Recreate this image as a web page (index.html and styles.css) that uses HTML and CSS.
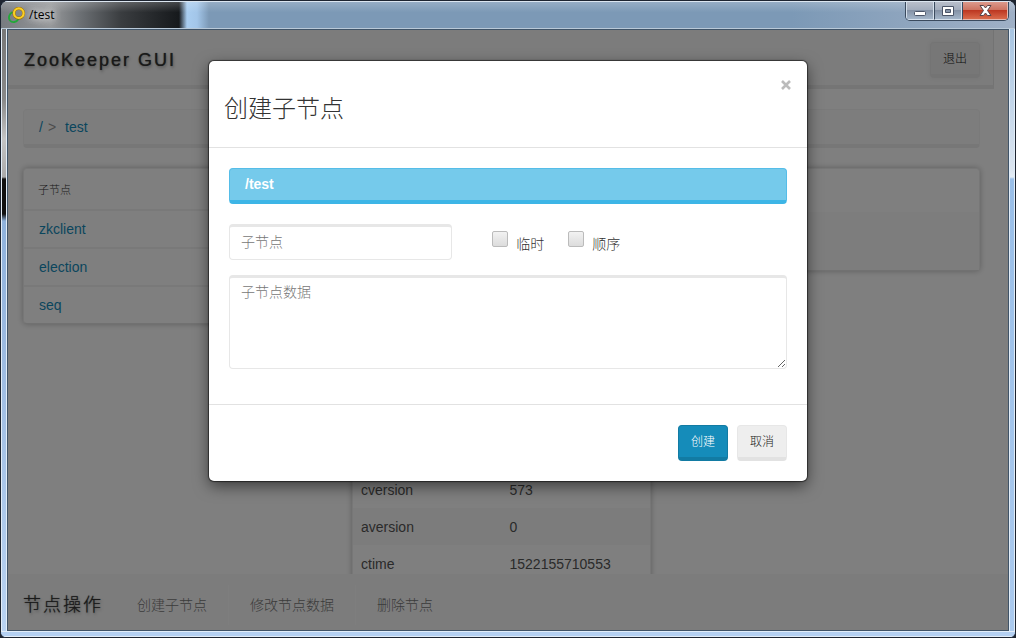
FILE: index.html
```html
<!DOCTYPE html>
<html lang="zh-CN">
<head>
<meta charset="utf-8">
<title>/test</title>
<link rel="stylesheet" href="styles.css">
</head>
<body>
<div class="window">
  <header class="titlebar">
    <svg class="app-icon" width="17" height="17" viewBox="0 0 17 17" aria-hidden="true">
      <path d="M4.500 5C1 7 0 11 2 13.500c2.200 2.500 6.500 2 8.500-1.500" fill="none" stroke="#22a838" stroke-width="1.800"/>
      <circle cx="10.800" cy="6.200" r="4.800" fill="none" stroke="#9a6a00" stroke-width="3"/>
      <circle cx="10.800" cy="6.200" r="4.800" fill="none" stroke="#f9cf25" stroke-width="2.200"/>
    </svg>
    <span class="title">/test</span>
    <div class="controls">
      <button class="control" type="button" aria-label="最小化"><svg width="14" height="10" viewBox="0 0 14 10"><rect x="1.500" y="5.500" width="11" height="4" rx="1" fill="#fff" stroke="#4b5568"/></svg></button>
      <button class="control" type="button" aria-label="最大化"><svg width="12" height="10" viewBox="0 0 12 10"><path fill-rule="evenodd" d="M.5.5h11v9H.5zM3.500 3.500v3h5v-3z" fill="#fff" stroke="#4b5568"/></svg></button>
      <button class="control control-close" type="button" aria-label="关闭窗口"><svg width="13" height="11" viewBox="0 0 13 11"><path d="M1 .5h3.500l2 2.500 2-2.500H12L8.500 5.500l3.500 5H8.500l-2-2.500-2 2.500H1l3.500-5z" fill="#fff" stroke="#54434a"/></svg></button>
    </div>
  </header>
  <div class="frame">
    <div class="edge edge-left"></div>
    <div class="client">
      <div class="page">
        <nav class="navbar">
          <a class="brand" href="#">ZooKeeper GUI</a>
          <button class="btn" type="button">退出</button>
        </nav>
        <div class="content">
          <ol class="breadcrumb">
            <li><a href="#">/</a></li>
            <li><a href="#">test</a></li>
          </ol>
          <div class="columns">
            <section class="card">
              <h2 class="card-heading">子节点</h2>
              <ul class="list">
                <li><a href="#">zkclient</a></li>
                <li><a href="#">election</a></li>
                <li><a href="#">seq</a></li>
              </ul>
            </section>
            <section class="card stat">
              <table class="stat-table">
                <tr><td>cversion</td><td>573</td></tr>
                <tr><td>aversion</td><td>0</td></tr>
                <tr><td>ctime</td><td>1522155710553</td></tr>
              </table>
            </section>
            <section class="card data"><div class="data-heading"></div><div class="data-body"></div></section>
          </div>
        </div>
      </div>
      <nav class="actions">
        <span class="brand">节点操作</span>
        <a href="#">创建子节点</a>
        <a href="#">修改节点数据</a>
        <a href="#">删除节点</a>
      </nav>
      <div class="overlay">
        <form class="modal" role="dialog" aria-labelledby="modal-title">
          <div class="modal-header">
            <h1 class="modal-title" id="modal-title">创建子节点</h1>
            <button class="close" type="button" aria-label="关闭"><svg width="10" height="10" viewBox="0 0 10 10"><path d="M1 1l8 8M9 1L1 9" stroke="currentColor" stroke-width="2.600"/></svg></button>
          </div>
          <div class="modal-body">
            <div class="alert">/test</div>
            <div class="row">
              <input class="field" type="text" placeholder="子节点" aria-label="子节点">
              <div class="check"><input type="checkbox" id="ephemeral"><label for="ephemeral">临时</label></div>
              <div class="check"><input type="checkbox" id="sequential"><label for="sequential">顺序</label></div>
            </div>
            <textarea class="field area" placeholder="子节点数据" aria-label="子节点数据"></textarea>
          </div>
          <div class="modal-footer">
            <button class="btn btn-primary" type="button">创建</button>
            <button class="btn" type="button">取消</button>
          </div>
        </form>
      </div>
    </div>
    <div class="edge edge-right"></div>
  </div>
  <div class="edge-bottom"></div>
</div>
</body>
</html>
```
FILE: styles.css
```css
* { box-sizing: border-box; }
body {
  margin: 0;
  background: #1d2430;
  color: #555;
  font: 300 14px/20px "Liberation Sans", "Noto Sans CJK SC", sans-serif;
}
a { color: #158cba; text-decoration: none; }
button, input, textarea { font: inherit; }
h1, h2, ol, ul { margin: 0; padding: 0; font-weight: 300; list-style: none; }

.window {
  display: flex;
  flex-direction: column;
  height: 100vh;
  overflow: hidden;
  border: 1px solid #1d2430;
  border-radius: 8px 8px 6px 6px;
  background: #b4d0f0;
}
.titlebar {
  display: flex;
  flex: none;
  align-items: flex-start;
  height: 28px;
  padding-left: 7px;
  padding-right: 6px;
  border-top: 1px solid #dce6f0;
  border-bottom: 1px solid #b9c9d8;
  background:
    linear-gradient(#fff3, #fff0 40%),
    linear-gradient(90deg, #777b80 0, #96989a 50px, #6b6f73 80px, #3a3d40 120px, #16191c 178px, #a9cdf0 186px, #a3c6e9 196px, #7c99b6 208px, #7c99b6 78%, #9fb0c6 100%);
}
.app-icon { margin-top: 5px; }
.title {
  margin: 3px 0 0 4px;
  color: #000;
  font: 12px/20px "Open Sans", sans-serif;
  text-shadow: 0 0 8px #fff, 0 0 8px #fff;
}
.controls {
  display: flex;
  margin-left: auto;
  border: 1px solid #3a4a5e;
  border-top: 0;
  border-radius: 0 0 5px 5px;
  overflow: hidden;
}
.control {
  display: grid;
  place-items: center;
  width: 28px;
  height: 18px;
  padding: 0;
  border: 1px solid #d5e0ec;
  border-top: 0;
  background: linear-gradient(#b9bfcb, #a3adbd 45%, #8492a6 50%, #a3b5c9);
}
.control + .control { border-left-color: #3a4a5e; }
.control-close {
  width: 46px;
  border-color: #e6b7ad;
  background: linear-gradient(#dc9a8c, #cd7462 45%, #bd3822 50%, #d96a4b);
}

.frame { display: flex; flex: 1; min-height: 0; }
.edge { flex: none; width: 6px; border: solid #e2edf8; border-width: 0 1px; }
.edge-left {
  background: linear-gradient(#777 0, #888 70px, #c4c4c4 110px, #aaa 148px, #111 150px, #111 185px, #8fb2dc 192px, #9ab9e0 50%, #b9d3f2 100%);
}
.edge-right { background: linear-gradient(#a8c5e2 0, #dbe5f0 140px, #e4edf6 148px, #9abfe8 150px, #abcaee 100%); }
.edge-bottom { flex: none; height: 6px; border: solid #e2edf8; border-width: 1px 0; background: #b4d0f2; }

.client {
  position: relative;
  display: flex;
  flex: 1;
  flex-direction: column;
  min-width: 0;
  overflow: hidden;
  border: 1px solid #405468;
  background: #fff;
}
.page { flex: 1; min-height: 0; margin-right: 14px; overflow: hidden; }
.navbar {
  display: flex;
  align-items: center;
  justify-content: space-between;
  height: 59px;
  padding: 0 13px 0 16px;
  border-right: 1px solid #e7e7e7;
  border-bottom: 4px solid #ebebeb;
  background: #f8f8f8;
}
.navbar .brand { padding-top: 4px; }
.brand {
  color: #333;
  font-size: 18px;
  letter-spacing: 2px;
  text-shadow: 0 0 1px #555, 1px 2px 3px #aaa;
}
.content { padding: 20px 14px 0 15px; }
.breadcrumb {
  display: flex;
  height: 39px;
  margin-bottom: 20px;
  padding: 7px 15px;
  border: 1px solid #f5f5f5;
  border-bottom: 4px solid #eee;
  border-radius: 4px;
  background: #fafafa;
}
.breadcrumb li + li::before { content: ">"; padding: 0 9px 0 5px; color: #999; }
.columns { display: grid; grid-template-columns: repeat(3, 1fr); gap: 30px; align-items: start; }
.card {
  border: 1px solid #eee;
  border-bottom-color: #e2e2e2;
  border-radius: 4px;
  background: #fff;
  box-shadow: 0 0 6px #bbb;
}
.card-heading { padding: 11px 14px 9px; color: #333; font-size: 11px; line-height: 20px; }
.list li { height: 38px; padding: 8px 15px; border-top: 2px solid #f2f2f2; }
.stat { padding-top: 302px; }
.stat-table { width: 100%; border-collapse: collapse; table-layout: fixed; }
.stat-table td { height: 37px; padding: 8px; }
.stat-table tr:nth-child(even) { background: #f9f9f9; }
.data-heading { height: 43px; }
.data-body { height: 58px; background: #fafafa; }

.actions {
  display: flex;
  flex: none;
  align-items: center;
  height: 56px;
  padding-left: 15px;
  padding-top: 6px;
  background: #f8f8f8;
}
.actions .brand { margin-right: 13px; }
.actions a { padding: 10px 21px; color: #777; }
.actions a + a { border-left: 1px solid #fcfcfc; }

.overlay {
  position: absolute;
  inset: 0;
  padding: 31px 20px;
  background: rgba(0, 0, 0, 0.5);
}
.modal {
  max-width: 598px;
  margin: 0 auto;
  border-radius: 5px;
  background: #fff;
  box-shadow: 0 0 1px 1px #0008, 0 5px 15px #0008;
}
.modal-header {
  display: flex;
  align-items: flex-start;
  justify-content: space-between;
  padding: 16px 16px 15px 15px;
  border-bottom: 1px solid #e2e2e2;
}
.modal-title { margin: 18px 0 10px; color: #333; font-size: 24px; line-height: 27px; }
.close { display: flex; margin-top: 3px; padding: 0; border: 0; background: none; color: #bbb; }
.modal-body { padding: 20px 20px 35px; }
.alert {
  height: 36px;
  margin-bottom: 20px;
  padding: 5px 15px;
  border: 1px solid #55bde8;
  border-bottom: 4px solid #3db5e6;
  border-radius: 4px;
  background: #75caeb;
  color: #fff;
  font-weight: 700;
}
.row { display: flex; margin-bottom: 15px; }
.field {
  width: 40%;
  height: 36px;
  padding: 4px 11px 6px;
  border: 1px solid #e7e7e7;
  border-top-width: 3px;
  border-radius: 4px;
  background: #fff;
  color: #555;
}
.field::placeholder { color: #777; opacity: 1; }
.area { display: block; width: 100%; height: 94px; resize: vertical; }
.check { display: flex; align-items: flex-start; margin-left: 24px; padding-top: 7px; }
.field + .check { margin-left: 40px; }
.check input {
  appearance: none;
  width: 16px;
  height: 16px;
  margin: 0 8px 0 0;
  border: 1px solid #bbb;
  border-radius: 2px;
  background: linear-gradient(#f2f2f2, #dcdcdc);
}
.check label { padding-top: 3px; color: #333; }
.modal-footer {
  display: flex;
  justify-content: flex-end;
  gap: 9px;
  padding: 20px;
  border-top: 1px solid #e2e2e2;
}
.btn {
  height: 36px;
  padding: 5px 12px;
  border: 1px solid #e7e7e7;
  border-bottom: 4px solid #e2e2e2;
  border-radius: 4px;
  background: #eee;
  color: #222;
  font-size: 12px;
}
.navbar .btn { margin-top: 5px; border-color: #e9e9e9; box-shadow: 0 0 4px #e9e9e9; }
.btn-primary { border-color: #127ba3; background: #158cba; color: #fff; }
```
